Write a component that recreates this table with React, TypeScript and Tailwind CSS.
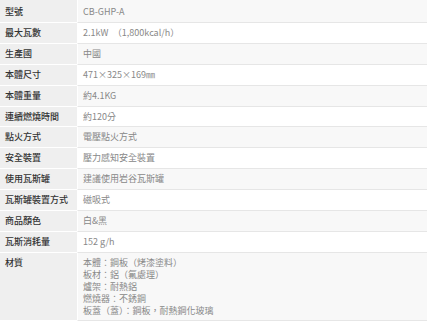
import React from "react";

const rows: [string, React.ReactNode][] = [
  ["型號", "CB-GHP-A"],
  ["最大瓦數", "2.1kW　（1,800kcal/h）"],
  ["生產國", "中國"],
  ["本體尺寸", "471×325×169㎜"],
  ["本體重量", "約4.1KG"],
  ["連續燃燒時間", "約120分"],
  ["點火方式", "電壓點火方式"],
  ["安全裝置", "壓力感知安全裝置"],
  ["使用瓦斯罐", "建議使用岩谷瓦斯罐"],
  ["瓦斯罐裝置方式", "磁吸式"],
  ["商品顏色", "白&黑"],
  ["瓦斯消耗量", "152 g/h"],
  [
    "材質",
    <>
      本體：鋼板（烤漆塗料）
      <br />
      板材：鋁（氟處理）
      <br />
      爐架：耐熱鋁
      <br />
      燃燒器：不銹鋼
      <br />
      板蓋（蓋）：鋼板，耐熱鋼化玻璃
    </>,
  ],
];

export default function App() {
  return (
    <div
      className="w-[427px] bg-white text-[9px] leading-[11.9px]"
      style={{ fontFamily: '"Noto Sans CJK TC", "Noto Sans", sans-serif' }}
    >
      {rows.map(([label, value], i) => (
        <div key={i} className="flex">
          <div
            className={
              "w-[77px] shrink-0 bg-[#efefef] border-b border-white px-[5px] pb-1 font-medium text-[#333] " +
              (i === 0 ? "pt-[6px]" : "pt-1")
            }
          >
            {label}
          </div>
          <div
            className={
              "flex-1 border-l border-white border-b border-b-[#e6e6e6] px-[5px] pb-1 text-[#888] " +
              (i === 0 ? "pt-[6px] " : "pt-1 ") +
              (i % 2 === 0 ? "bg-[#f8f8f8]" : "bg-white")
            }
          >
            {value}
          </div>
        </div>
      ))}
    </div>
  );
}
